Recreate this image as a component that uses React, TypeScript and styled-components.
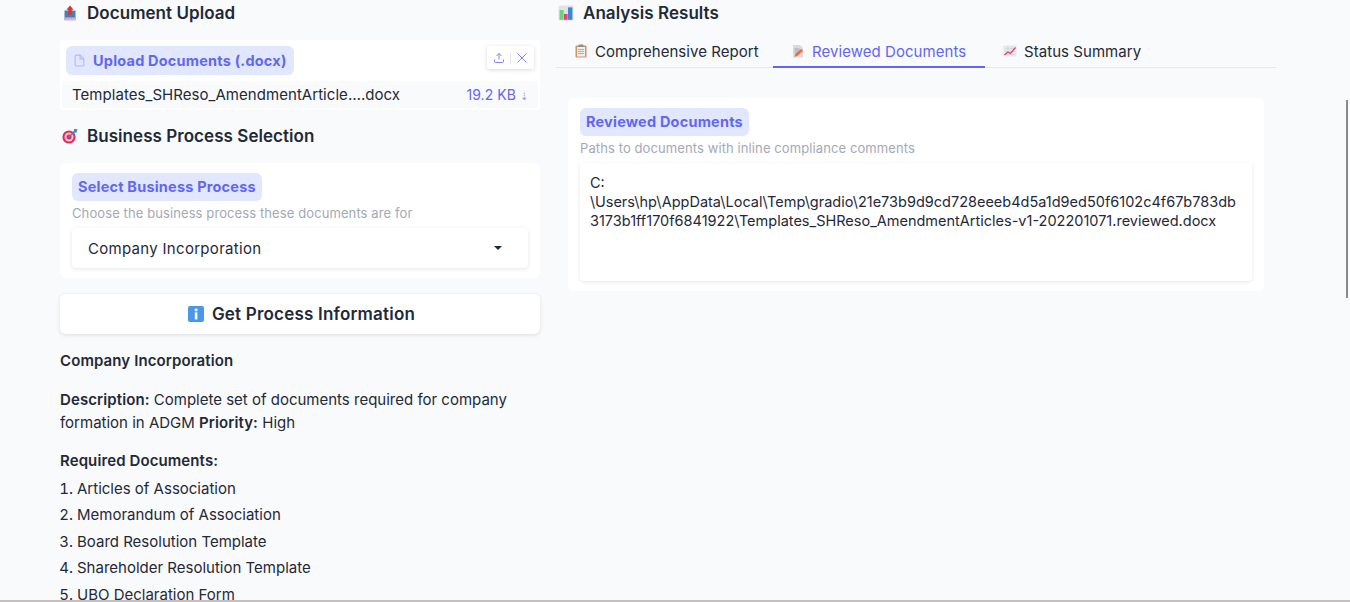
import * as React from 'react';
import styled, { createGlobalStyle } from 'styled-components';

const FONT = `'Inter', 'Noto Sans', sans-serif`;

const GlobalStyle = createGlobalStyle`
  html, body {
    margin: 0;
    height: 100%;
    overflow: hidden;
    background: #f9fafb;
  }
  * {
    box-sizing: border-box;
  }
`;

function UploadEmoji() {
  return (
    <EmojiSvg viewBox="0 0 16 16">
      <path d="M2.5 5.5h11V15h-11z" fill="#4a7fb5" />
      <path d="M2.5 12.5h11V15.5h-11z" fill="#c9b8d4" />
      <path d="M8 .5l3.6 4.2H9.7V10H6.3V4.7H4.4z" fill="#d8343f" />
    </EmojiSvg>
  );
}

function TargetEmoji() {
  return (
    <EmojiSvg viewBox="0 0 16 16">
      <circle cx="7" cy="9" r="6.6" fill="#dd2e5f" />
      <circle cx="7" cy="9" r="4.5" fill="#f6c6d4" />
      <circle cx="7" cy="9" r="2.5" fill="#dd2e5f" />
      <path d="M7 9l6-6" stroke="#3b88c3" strokeWidth="1.4" />
      <path d="M12 1l3.5.2-1 3.2-2.8.4z" fill="#3b88c3" />
    </EmojiSvg>
  );
}

function ChartEmoji() {
  return (
    <EmojiSvg viewBox="0 0 16 16">
      <rect x="0.5" y="0.5" width="15" height="15" rx="1.5" fill="#dfe2e7" />
      <rect x="1.6" y="5" width="4" height="9.8" fill="#6fd07a" />
      <rect x="6" y="9" width="3.6" height="5.8" fill="#e8407a" />
      <rect x="10" y="2.4" width="4.4" height="12.4" fill="#3e86d0" />
    </EmojiSvg>
  );
}

function InfoEmoji() {
  return (
    <EmojiSvg viewBox="0 0 16 16">
      <rect width="16" height="16" rx="2" fill="#4a96e8" />
      <rect x="6.8" y="2.6" width="2.6" height="2.6" fill="#fff" />
      <rect x="6.8" y="6.4" width="2.6" height="7" fill="#fff" />
    </EmojiSvg>
  );
}

function ClipboardEmoji() {
  return (
    <TabSvg viewBox="0 0 14 14">
      <rect x="1.5" y="1.5" width="11" height="12" rx="1" fill="#d8915c" />
      <rect x="3" y="3" width="8" height="9.5" fill="#eceef0" />
      <rect x="4.5" y="0.5" width="5" height="2.5" rx="0.6" fill="#8a8f96" />
      <path d="M4 5.5h6M4 7.5h6M4 9.5h6" stroke="#9aa0a8" strokeWidth="0.8" />
    </TabSvg>
  );
}

function MemoEmoji() {
  return (
    <TabSvg viewBox="0 0 14 14">
      <path d="M2 1h7l3 3v9.5H2z" fill="#dcd8de" />
      <path d="M3.5 5h5M3.5 7h5M3.5 9h3" stroke="#9b98a2" strokeWidth="0.8" />
      <path d="M3.5 13l1-3 5.5-5 2 1.8-5.5 5z" fill="#ee6b3a" />
    </TabSvg>
  );
}

function TrendEmoji() {
  return (
    <TabSvg viewBox="0 0 14 14">
      <rect x="0.5" y="1.5" width="13" height="11" fill="#e6e8ee" />
      <path d="M1.5 4.5h11M1.5 7.5h11M1.5 10.5h11M5 2v10M9 2v10" stroke="#c8ccd6" strokeWidth="0.5" />
      <path d="M1.5 11l3.5-3 2.5 1.5L12.5 3.5" stroke="#d8445c" strokeWidth="1.2" fill="none" />
    </TabSvg>
  );
}

export default function App() {
  return (
    <Page>
      <GlobalStyle />
      <LeftColumn>
        <SectionHeading>
          <UploadEmoji />
          Document Upload
        </SectionHeading>
        <UploadCard>
          <UploadTop>
            <Badge $compact>
              <FileGlyph viewBox="0 0 24 24">
                <path d="M13 2H6a2 2 0 0 0-2 2v16a2 2 0 0 0 2 2h12a2 2 0 0 0 2-2V9z" />
                <path d="M13 2v7h7" />
              </FileGlyph>
              Upload Documents (.docx)
            </Badge>
            <IconTray>
              <TrayIcon viewBox="0 0 24 24">
                <path d="M3 15v4c0 1.1.9 2 2 2h14a2 2 0 0 0 2-2v-4" />
                <path d="M17 8l-5-5-5 5" />
                <path d="M12 3v12" />
              </TrayIcon>
              <TrayDivider />
              <TrayIcon viewBox="0 0 24 24">
                <path d="M3 3l18 18M21 3L3 21" />
              </TrayIcon>
            </IconTray>
          </UploadTop>
          <FileRow>
            <span>Templates_SHReso_AmendmentArticle….docx</span>
            <FileSize>
              19.2 KB <Arrow>⇣</Arrow>
            </FileSize>
          </FileRow>
        </UploadCard>

        <SectionHeading $spaced>
          <TargetEmoji />
          Business Process Selection
        </SectionHeading>
        <SelectCard>
          <Badge>Select Business Process</Badge>
          <Hint>Choose the business process these documents are for</Hint>
          <SelectBox>
            Company Incorporation
            <Caret />
          </SelectBox>
        </SelectCard>

        <ActionButton>
          <InfoEmoji />
          Get Process Information
        </ActionButton>

        <Markdown>
          <Para>
            <b>Company Incorporation</b>
          </Para>
          <Para>
            <b>Description:</b> Complete set of documents required for company formation in ADGM{' '}
            <b>Priority:</b> High
          </Para>
          <Para>
            <b>Required Documents:</b>
          </Para>
          <DocList>
            <li>Articles of Association</li>
            <li>Memorandum of Association</li>
            <li>Board Resolution Template</li>
            <li>Shareholder Resolution Template</li>
            <li>UBO Declaration Form</li>
          </DocList>
        </Markdown>
      </LeftColumn>

      <RightColumn>
        <SectionHeading>
          <ChartEmoji />
          Analysis Results
        </SectionHeading>
        <TabBar>
          <Tab>
            <ClipboardEmoji />
            Comprehensive Report
          </Tab>
          <Tab $active>
            <MemoEmoji />
            Reviewed Documents
          </Tab>
          <Tab>
            <TrendEmoji />
            Status Summary
          </Tab>
        </TabBar>
        <ResultCard>
          <Badge>Reviewed Documents</Badge>
          <Hint>Paths to documents with inline compliance comments</Hint>
          <PathBox>
            C:
            <br />
            \Users\hp\AppData\Local\Temp\gradio\21e73b9d9cd728eeeb4d5a1d9ed50f6102c4f67b783db
            <br />
            3173b1ff170f6841922\Templates_SHReso_AmendmentArticles-v1-202201071.reviewed.docx
          </PathBox>
        </ResultCard>
      </RightColumn>

      <ScrollThumb />
      <BottomEdge />
    </Page>
  );
}

const Page = styled.div`
  height: 602px;
  overflow: hidden;
  display: grid;
  grid-template-columns: 480px 720px;
  column-gap: 16px;
  align-items: start;
  padding-left: 60px;
  font-family: ${FONT};
  color: #1f2937;
`;

const LeftColumn = styled.div`
  display: flex;
  flex-direction: column;
`;

const RightColumn = styled.div`
  display: flex;
  flex-direction: column;
`;

const SectionHeading = styled.h2<{ $spaced?: boolean }>`
  margin: ${p => (p.$spaced ? '14px' : '1px')} 0 0 2px;
  height: 23px;
  display: flex;
  align-items: center;
  gap: 9px;
  font-size: 17px;
  font-weight: 600;
  letter-spacing: 0.05px;
  color: #1f2937;
`;

const EmojiSvg = styled.svg`
  width: 16px;
  height: 16px;
  flex: none;
`;

const TabSvg = styled.svg`
  width: 14px;
  height: 14px;
  flex: none;
`;

const UploadCard = styled.div`
  margin-top: 16px;
  height: 70px;
  padding: 6px 2px 2px;
  background: #fff;
  border-radius: 4px;
  display: flex;
  flex-direction: column;
`;

const UploadTop = styled.div`
  display: flex;
  justify-content: space-between;
  align-items: flex-start;
  padding: 0 4px;
`;

const Badge = styled.div<{ $compact?: boolean }>`
  align-self: flex-start;
  width: fit-content;
  height: ${p => (p.$compact ? '29px' : '28px')};
  display: flex;
  align-items: center;
  gap: 7px;
  padding: 0 ${p => (p.$compact ? '7px' : '6px')} 1px;
  border-radius: 6px;
  background: #e0e7ff;
  color: #6366f1;
  font-size: 14.5px;
  font-weight: 700;
  letter-spacing: 0.2px;
`;

const FileGlyph = styled.svg`
  width: 13px;
  height: 13px;
  fill: none;
  stroke: #b4b8f5;
  stroke-width: 2;
`;

const IconTray = styled.div`
  width: 47px;
  height: 23px;
  display: flex;
  align-items: center;
  justify-content: center;
  gap: 5px;
  background: #fff;
  border-radius: 2px;
  box-shadow: 0 1px 4px rgba(0, 0, 0, 0.15);
`;

const TrayIcon = styled.svg`
  width: 12px;
  height: 12px;
  fill: none;
  stroke: #6366f1;
  stroke-width: 1.6;
`;

const TrayDivider = styled.span`
  width: 1px;
  height: 10px;
  background: #e3e5ea;
`;

const FileRow = styled.div`
  margin-top: 6px;
  height: 27px;
  padding: 0 10px;
  display: flex;
  align-items: center;
  justify-content: space-between;
  background: #f9fafb;
  font-size: 15px;
  letter-spacing: 0.05px;
  color: #1f2937;
`;

const FileSize = styled.span`
  color: #6366f1;
  font-size: 14px;
`;

const Arrow = styled.span`
  font-size: 10px;
  color: #8f91f3;
`;

const SelectCard = styled.div`
  margin-top: 16px;
  height: 115px;
  padding: 10px 12px;
  background: #fff;
  border-radius: 6px;
  display: flex;
  flex-direction: column;
`;

const Hint = styled.div`
  margin-top: 4px;
  font-size: 13px;
  letter-spacing: 0.1px;
  line-height: 16px;
  color: #a3a9b5;
`;

const SelectBox = styled.div`
  margin-top: 7px;
  height: 40px;
  padding: 0 16px;
  display: flex;
  align-items: center;
  justify-content: space-between;
  background: #fff;
  border-radius: 4px;
  box-shadow: 0 1px 4px rgba(0, 0, 0, 0.1);
  font-size: 15px;
  letter-spacing: 0.3px;
  color: #1f2937;
`;

const Caret = styled.span`
  margin-right: 10px;
  width: 0;
  height: 0;
  border-left: 4px solid transparent;
  border-right: 4px solid transparent;
  border-top: 4px solid #1f2937;
`;

const ActionButton = styled.div`
  margin-top: 16px;
  height: 40px;
  padding-left: 3px;
  display: flex;
  align-items: center;
  justify-content: center;
  gap: 8px;
  background: #fff;
  border-radius: 6px;
  box-shadow: 0 1px 4px rgba(0, 0, 0, 0.12);
  font-size: 17px;
  font-weight: 600;
  letter-spacing: 0.2px;
  color: #1f2937;
`;

const Markdown = styled.div`
  margin-top: 15px;
  font-size: 15px;
  line-height: 23px;
  color: #1f2937;

  b {
    font-weight: 600;
    letter-spacing: 0.1px;
  }
`;

const Para = styled.p`
  margin: 0 0 15.5px;
`;

const DocList = styled.ol`
  margin: -12px 0 0;
  padding: 0 0 0 17px;

  li {
    height: 26.5px;
    line-height: 26.5px;
  }
`;

const TabBar = styled.div`
  margin-top: 12px;
  height: 32px;
  display: grid;
  grid-template-columns: 217px 212px auto;
  justify-content: start;
  border-bottom: 1px solid #e5e7eb;
`;

const Tab = styled.div<{ $active?: boolean }>`
  height: 32px;
  padding-left: 18px;
  display: flex;
  align-items: center;
  gap: 7px;
  font-size: 15px;
  letter-spacing: 0.05px;
  color: ${p => (p.$active ? '#6366f1' : '#1f2937')};
  border-bottom: 2px solid ${p => (p.$active ? '#6366f1' : 'transparent')};
`;

const ResultCard = styled.div`
  margin: 30px 12px 0;
  height: 193px;
  padding: 10px 12px;
  background: #fff;
  border-radius: 6px;
  display: flex;
  flex-direction: column;
`;

const PathBox = styled.div`
  margin-top: 7px;
  height: 118px;
  padding: 10px;
  background: #fff;
  border-radius: 4px;
  box-shadow: 0 1px 4px rgba(0, 0, 0, 0.1);
  font-size: 14.5px;
  line-height: 19px;
  color: #1f2937;
  white-space: nowrap;
`;

const ScrollThumb = styled.div`
  position: fixed;
  top: 100px;
  right: 2px;
  width: 2px;
  height: 198px;
  background: #8a8a8a;
`;

const BottomEdge = styled.div`
  position: fixed;
  left: 0;
  right: 0;
  bottom: 0;
  height: 2px;
  background: #c9bdbd;
`;
